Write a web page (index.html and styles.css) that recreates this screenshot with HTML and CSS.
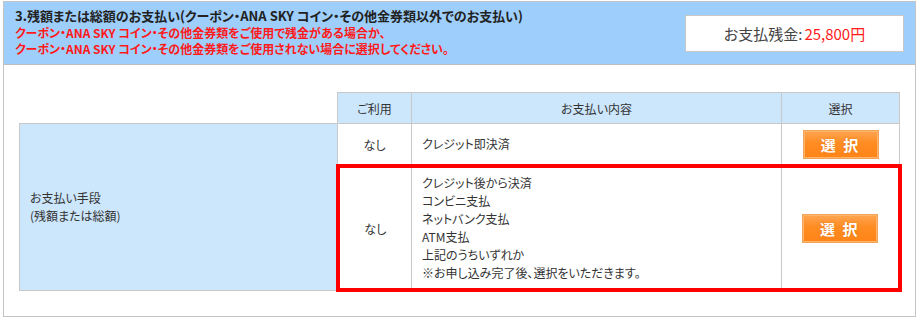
FILE: index.html
```html
<!DOCTYPE html>
<html lang="ja">
<head>
    <meta charset="UTF-8">
    <meta name="viewport" content="width=device-width, initial-scale=1.0">
    <title>お支払い</title>
    <link rel="stylesheet" href="styles.css">
</head>
<body>
    <div class="pay-box">
        <div class="pay-head">
            <div class="pay-head-text">
                <h2>3.残額または総額のお支払い(クーポン・ANA SKY コイン・その他金券類以外でのお支払い)</h2>
                <p class="note">クーポン・ANA SKY コイン・その他金券類をご使用で残金がある場合か、<br>クーポン・ANA SKY コイン・その他金券類をご使用されない場合に選択してください。</p>
            </div>
            <div class="balance">お支払残金:<span class="amount">25,800円</span></div>
        </div>

        <div class="pay-body">
            <table class="pay-table">
                <colgroup>
                    <col class="c-label">
                    <col class="c-use">
                    <col class="c-detail">
                    <col class="c-select">
                </colgroup>
                <tr class="head-row">
                    <th class="blank"></th>
                    <th>ご利用</th>
                    <th>お支払い内容</th>
                    <th>選択</th>
                </tr>
                <tr class="first-row">
                    <td class="label" rowspan="2">お支払い手段<br>(残額または総額)</td>
                    <td class="use">なし</td>
                    <td class="detail">クレジット即決済</td>
                    <td class="select"><button class="btn-select">選 択</button></td>
                </tr>
                <tr class="picked">
                    <td class="use">なし</td>
                    <td class="detail">
                        クレジット後から決済<br>
                        コンビニ支払<br>
                        ネットバンク支払<br>
                        ATM支払<br>
                        上記のうちいずれか<br>
                        ※お申し込み完了後、選択をいただきます。
                    </td>
                    <td class="select"><button class="btn-select">選 択</button></td>
                </tr>
            </table>
        </div>
    </div>
</body>
</html>
```

FILE: styles.css
```css
body {
    margin: 0;
    padding: 1px 3px;
    font-family: "Noto Sans CJK JP", "Liberation Sans", sans-serif;
    font-feature-settings: "palt";
    color: #333;
    background-color: #fff;
}
.pay-box {
    width: 911px;
    border: 1px solid #c4c4c4;
}
.pay-head {
    display: flex;
    justify-content: space-between;
    align-items: flex-start;
    height: 62px;
    padding: 0 11px;
    background-color: #9dcefc;
    border-bottom: 1px solid #bfbfbf;
}
.pay-head h2 {
    margin: 5px 0 0 0;
    font-size: 13px;
    line-height: 17px;
    font-weight: bold;
    color: #222;
}
.note {
    margin: 1px 0 0 0;
    font-size: 12px;
    line-height: 16px;
    font-weight: bold;
    color: #ff1a1a;
}
.balance {
    margin-top: 13px;
    width: 217px;
    height: 35px;
    line-height: 35px;
    text-align: center;
    background-color: #fff;
    border: 1px solid #c8c8c8;
    font-size: 15px;
    color: #444;
}
.amount {
    color: #ff1a1a;
    margin-left: 2px;
}
.pay-body {
    padding: 27px 14px 24px 15px;
}
.pay-table {
    border-collapse: collapse;
    width: 880px;
    table-layout: fixed;
    font-size: 12px;
}
.c-label { width: 318px; }
.c-use { width: 74px; }
.c-detail { width: 370px; }
.c-select { width: 118px; }
.pay-table th,
.pay-table td {
    border: 1px solid #c9c9c9;
    padding: 0;
}
.pay-table th {
    height: 30px;
    font-weight: normal;
    background-color: #cce6fc;
    color: #333;
}
.pay-table th.blank {
    background: none;
    border-top: none;
    border-left: none;
}
.pay-table .label {
    padding: 0 10px;
    background-color: #cce6fc;
    line-height: 18px;
}
.use {
    text-align: center;
}
.pay-table .detail {
    padding: 0 10px;
    line-height: 18px;
}
.select {
    text-align: center;
}
.first-row td {
    height: 40px;
}
.picked td {
    height: 120px;
    border-top: 4px solid #f00;
    border-bottom: 4px solid #f00;
}
.picked td.use {
    border-left: 4px solid #f00;
}
.picked td.select {
    border-right: 4px solid #f00;
}
.btn-select {
    display: block;
    margin: 0 auto;
    width: 76px;
    height: 29px;
    padding: 0;
    border: 1px solid #f0a35c;
    box-shadow: inset 0 0 0 1px #ffb468;
    background: linear-gradient(#ffa552, #ff8c22 45%, #ff8417);
    color: #fff;
    font-family: "Noto Sans CJK JP", sans-serif;
    font-size: 15px;
    font-weight: bold;
    letter-spacing: 2px;
    text-shadow: 0 0 2px #e07010;
    cursor: pointer;
}
```
